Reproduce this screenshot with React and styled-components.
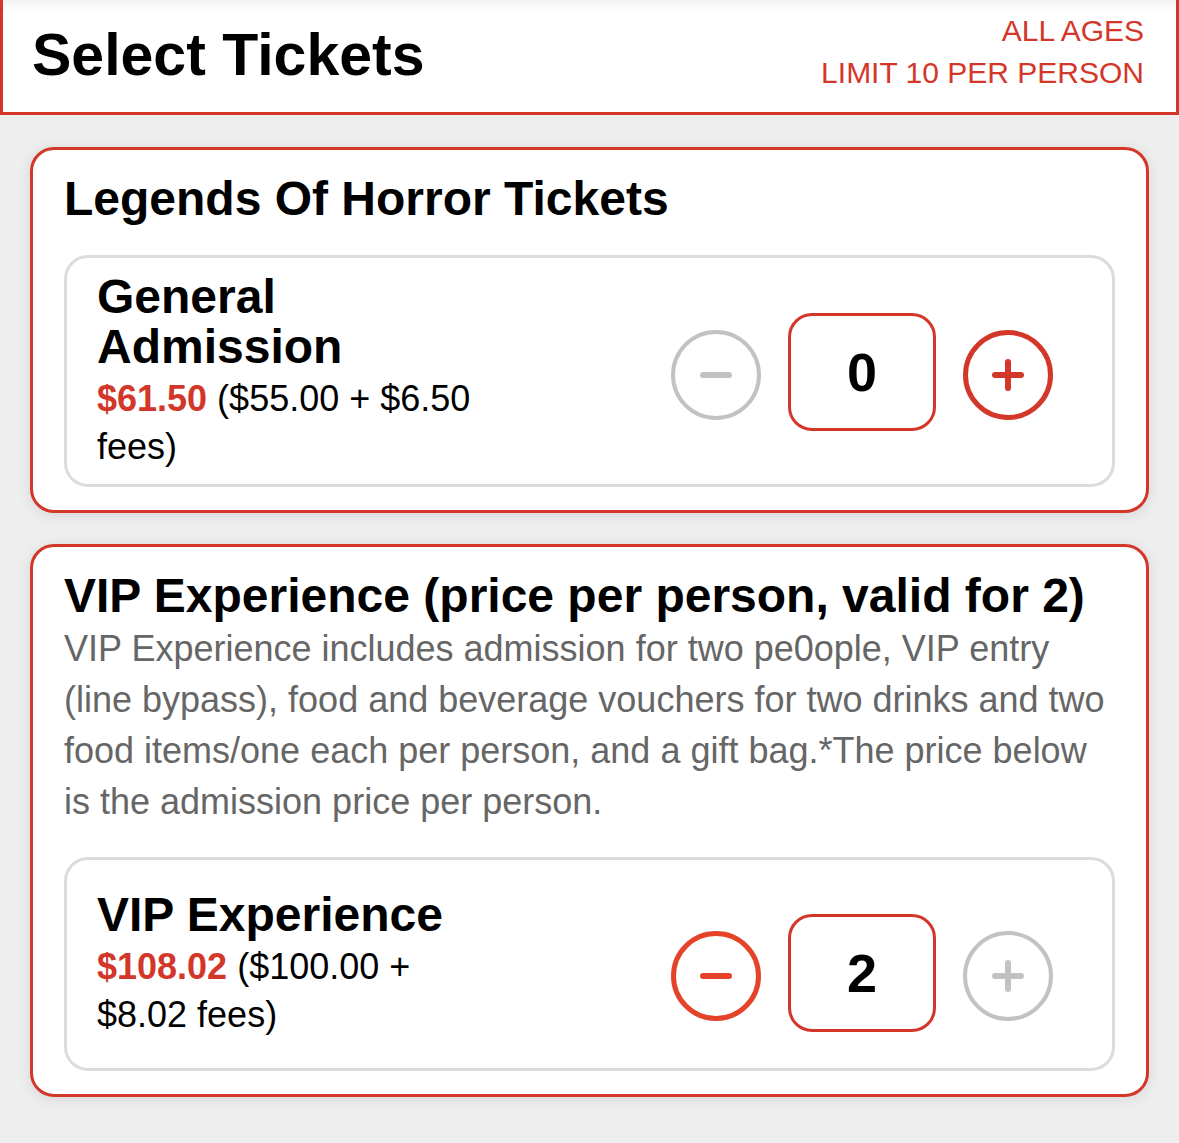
import React from "react";
import styled, { createGlobalStyle } from "styled-components";

const Global = createGlobalStyle`
  html, body { margin: 0; padding: 0; }
  body {
    background: #eeeeee;
    font-family: "Liberation Sans", Arial, sans-serif;
    color: #000;
  }
  * { box-sizing: border-box; }
`;

const RED = "#d3372a";

const Page = styled.div`
  width: 1179px;
  min-height: 1143px;
  padding-bottom: 40px;
`;

const Header = styled.header`
  display: flex;
  align-items: center;
  justify-content: space-between;
  height: 115px;
  padding: 0 32px 2px 29px;
  background: linear-gradient(#f3f3f3, #ffffff 12px);
  border: 3px solid ${RED};
  border-top: none;
`;

const PageTitle = styled.h1`
  margin: 0;
  font-size: 59px;
  font-weight: 700;
  line-height: 1;
`;

const Notes = styled.div`
  text-align: right;
  color: ${RED};
  font-size: 30px;
  line-height: 42px;
  margin-top: -6px;
`;

const Cards = styled.div`
  display: flex;
  flex-direction: column;
  gap: 31px;
  padding: 32px 30px 0 30px;
`;

const Card = styled.section`
  background: #fff;
  border: 3px solid ${RED};
  border-radius: 24px;
  padding: 21px 31px 23px;
  box-shadow: 0 2px 14px rgba(0, 0, 0, 0.1);
`;

const CardTitle = styled.h2`
  margin: 0;
  font-size: 48px;
  font-weight: 700;
  line-height: 55px;
`;

const Description = styled.p`
  margin: 0;
  color: #666666;
  font-size: 36px;
  line-height: 51px;
`;

const TicketRow = styled.div`
  display: flex;
  align-items: center;
  justify-content: space-between;
  margin-top: ${(p) => p.$gap}px;
  min-height: 214px;
  padding: 14px 59px 13px 30px;
  border: 3px solid #dcdcdc;
  border-radius: 24px;
  background: #fff;
`;

const Info = styled.div`
  width: 400px;
`;

const TicketName = styled.h3`
  margin: 0;
  font-size: 48px;
  font-weight: 700;
  line-height: 50px;
`;

const PriceLine = styled.p`
  margin: 3px 0 0;
  font-size: 36px;
  line-height: 48px;
`;

const Price = styled.span`
  color: ${RED};
  font-weight: 700;
`;

const Stepper = styled.div`
  display: flex;
  align-items: center;
  gap: 27px;
  margin-top: ${(p) => p.$shift}px;
`;

const RoundButton = styled.button`
  display: flex;
  align-items: center;
  justify-content: center;
  flex: 0 0 90px;
  width: 90px;
  height: 90px;
  padding: 0;
  border-radius: 50%;
  background: #fff;
  border: ${(p) => (p.$active ? 5 : 4)}px solid ${(p) => p.$color};
  color: ${(p) => p.$color};
  cursor: pointer;
  margin-top: 6px;
`;

const Count = styled.div`
  display: flex;
  align-items: center;
  justify-content: center;
  flex: 0 0 148px;
  width: 148px;
  height: 118px;
  border: 3px solid ${RED};
  border-radius: 24px;
  font-size: 54px;
  font-weight: 700;
`;

const MinusIcon = () => (
  <svg width="32" height="32" viewBox="0 0 32 32" aria-hidden="true">
    <line x1="3" y1="16" x2="29" y2="16" stroke="currentColor" strokeWidth="6" strokeLinecap="round" />
  </svg>
);

const PlusIcon = () => (
  <svg width="32" height="32" viewBox="0 0 32 32" aria-hidden="true">
    <line x1="3" y1="16" x2="29" y2="16" stroke="currentColor" strokeWidth="6" strokeLinecap="round" />
    <line x1="16" y1="3" x2="16" y2="29" stroke="currentColor" strokeWidth="6" strokeLinecap="round" />
  </svg>
);

const GRAY = "#c2c2c2";

function Ticket({ name, price, base, fees, count, canMinus, canPlus, gap, shift }) {
  return (
    <TicketRow $gap={gap}>
      <Info>
        <TicketName>{name}</TicketName>
        <PriceLine>
          <Price>{price}</Price> ({base} + {fees} fees)
        </PriceLine>
      </Info>
      <Stepper $shift={shift}>
        <RoundButton $active={canMinus} $color={canMinus ? "#e4432a" : GRAY} aria-label="decrease">
          <MinusIcon />
        </RoundButton>
        <Count>{count}</Count>
        <RoundButton $active={canPlus} $color={canPlus ? RED : GRAY} aria-label="increase">
          <PlusIcon />
        </RoundButton>
      </Stepper>
    </TicketRow>
  );
}

export default function App() {
  return (
    <Page>
      <Global />
      <Header>
        <PageTitle>Select Tickets</PageTitle>
        <Notes>
          <div>ALL AGES</div>
          <div>LIMIT 10 PER PERSON</div>
        </Notes>
      </Header>
      <Cards>
        <Card>
          <CardTitle>Legends Of Horror Tickets</CardTitle>
          <Ticket
            gap={29}
            shift={0}
            name={<>General<br />Admission</>}
            price="$61.50"
            base="$55.00"
            fees="$6.50"
            count={0}
            canMinus={false}
            canPlus={true}
          />
        </Card>
        <Card>
          <CardTitle>VIP Experience (price per person, valid for 2)</CardTitle>
          <Description>
            VIP Experience includes admission for two pe0ople, VIP entry (line bypass), food and
            beverage vouchers for two drinks and two food items/one each per person, and a gift
            bag.*The price below is the admission price per person.
          </Description>
          <Ticket
            gap={30}
            shift={16}
            name="VIP Experience"
            price="$108.02"
            base="$100.00"
            fees="$8.02"
            count={2}
            canMinus={true}
            canPlus={false}
          />
        </Card>
      </Cards>
    </Page>
  );
}
